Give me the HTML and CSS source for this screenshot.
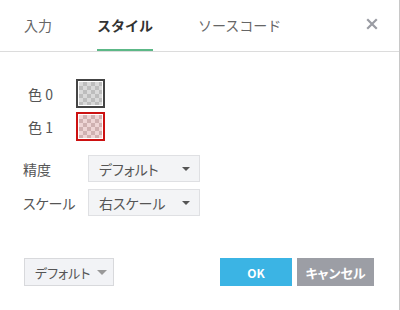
FILE: index.html
```html
<!DOCTYPE html>
<html lang="ja">
<head>
<meta charset="utf-8">
<link rel="stylesheet" href="styles.css">
</head>
<body>
<div class="dialog">
  <div class="tabs">
    <div class="tab">入力</div>
    <div class="tab active">スタイル</div>
    <div class="tab">ソースコード</div>
    <div class="close">
      <svg width="12" height="12" viewBox="0 0 12 12"><path d="M2 2L10 10M10 2L2 10" stroke="#9a9ca3" stroke-width="2.2" stroke-linecap="square"/></svg>
    </div>
  </div>
  <div class="content">
    <div class="colors">
      <div class="color-row">
        <span class="clabel">色 0</span>
        <span class="swatch gray"><span class="checker"></span></span>
      </div>
      <div class="color-row">
        <span class="clabel">色 1</span>
        <span class="swatch red"><span class="checker"></span></span>
      </div>
    </div>
    <div class="fields">
      <div class="field">
        <span class="flabel">精度</span>
        <div class="select"><span>デフォルト</span><span class="caret"></span></div>
      </div>
      <div class="field">
        <span class="flabel">スケール</span>
        <div class="select"><span>右スケール</span><span class="caret"></span></div>
      </div>
    </div>
  </div>
  <div class="footer">
    <div class="btn default">デフォルト<span class="caret light"></span></div>
    <div class="actions">
      <div class="btn ok">OK</div>
      <div class="btn cancel">キャンセル</div>
    </div>
  </div>
</div>
</body>
</html>
```
FILE: styles.css
```css
html, body {
  margin: 0;
  padding: 0;
  background: #fff;
}
body {
  font-family: "Noto Sans CJK JP", "Noto Sans", sans-serif;
  font-feature-settings: "palt";
  color: #555;
  font-size: 13px;
}
.dialog {
  width: 399px;
  height: 310px;
  border-right: 1px solid #c8c8c8;
  display: flex;
  flex-direction: column;
}
.tabs {
  height: 51px;
  border-bottom: 1px solid #dcdcdc;
  display: flex;
  align-items: stretch;
  padding-left: 24px;
  gap: 45px;
}
.tab {
  display: flex;
  align-items: center;
  font-size: 14px;
  font-feature-settings: normal;
  color: #666;
  border-bottom: 2px solid transparent;
}
.tab.active {
  color: #333;
  font-weight: bold;
  border-bottom-color: #5cb887;
}
.close {
  margin-left: auto;
  margin-right: 21px;
  display: flex;
  align-items: center;
  padding-bottom: 4px;
}
.content {
  display: flex;
  flex-direction: column;
}
.colors {
  padding: 28px 0 0 28px;
  display: flex;
  flex-direction: column;
  gap: 6px;
}
.color-row {
  display: flex;
  align-items: center;
  height: 27px;
}
.clabel {
  width: 48px;
  font-size: 14px;
  color: #555;
}
.swatch {
  width: 23px;
  height: 23px;
  border: 2px solid #444;
  padding: 1px;
  background: #fff;
  display: block;
}
.swatch.red { border-color: #cc1111; }
.checker {
  display: block;
  width: 100%;
  height: 100%;
  background-size: 8px 8px;
  background-position: 0 0, 4px 4px;
}
.gray .checker {
  background-color: #d9d9d9;
  background-image:
    linear-gradient(45deg, #bdbdbd 25%, transparent 25%, transparent 75%, #bdbdbd 75%),
    linear-gradient(45deg, #bdbdbd 25%, transparent 25%, transparent 75%, #bdbdbd 75%);
}
.red .checker {
  background-color: #eed5d5;
  background-image:
    linear-gradient(45deg, #cfb1b1 25%, transparent 25%, transparent 75%, #cfb1b1 75%),
    linear-gradient(45deg, #cfb1b1 25%, transparent 25%, transparent 75%, #cfb1b1 75%);
}
.fields {
  padding: 15px 0 0 23px;
  display: flex;
  flex-direction: column;
  gap: 7px;
}
.field {
  display: flex;
  align-items: center;
}
.flabel {
  width: 65px;
  font-size: 14px;
  color: #555;
}
.select {
  box-sizing: border-box;
  width: 112px;
  height: 27px;
  background: #f3f4f6;
  border: 1px solid #dfe0e3;
  display: flex;
  align-items: center;
  justify-content: space-between;
  padding: 0 9px 0 10px;
  font-size: 14px;
  color: #555;
}
.caret {
  width: 0;
  height: 0;
  border-left: 4px solid transparent;
  border-right: 4px solid transparent;
  border-top: 4px solid #555;
}
.caret.light {
  border-top-color: #999;
  border-left-width: 5px;
  border-right-width: 5px;
  border-top-width: 5px;
  margin-left: 7px;
}
.footer {
  margin-top: 42px;
  padding: 0 25px 0 24px;
  display: flex;
  justify-content: space-between;
}
.btn {
  box-sizing: border-box;
  height: 28px;
  display: flex;
  align-items: center;
  justify-content: center;
  font-size: 13px;
}
.btn.default {
  width: 90px;
  background: #f2f3f6;
  border: 1px solid #d8d9dc;
  color: #555;
  justify-content: flex-start;
  padding-left: 10px;
}
.actions {
  display: flex;
  gap: 5px;
}
.btn.ok {
  width: 72px;
  background: #3bb4e4;
  color: #fff;
  font-weight: bold;
  font-size: 12px;
}
.btn.cancel {
  width: 77px;
  background: #9c9ea5;
  color: #fff;
  font-weight: bold;
}
```
